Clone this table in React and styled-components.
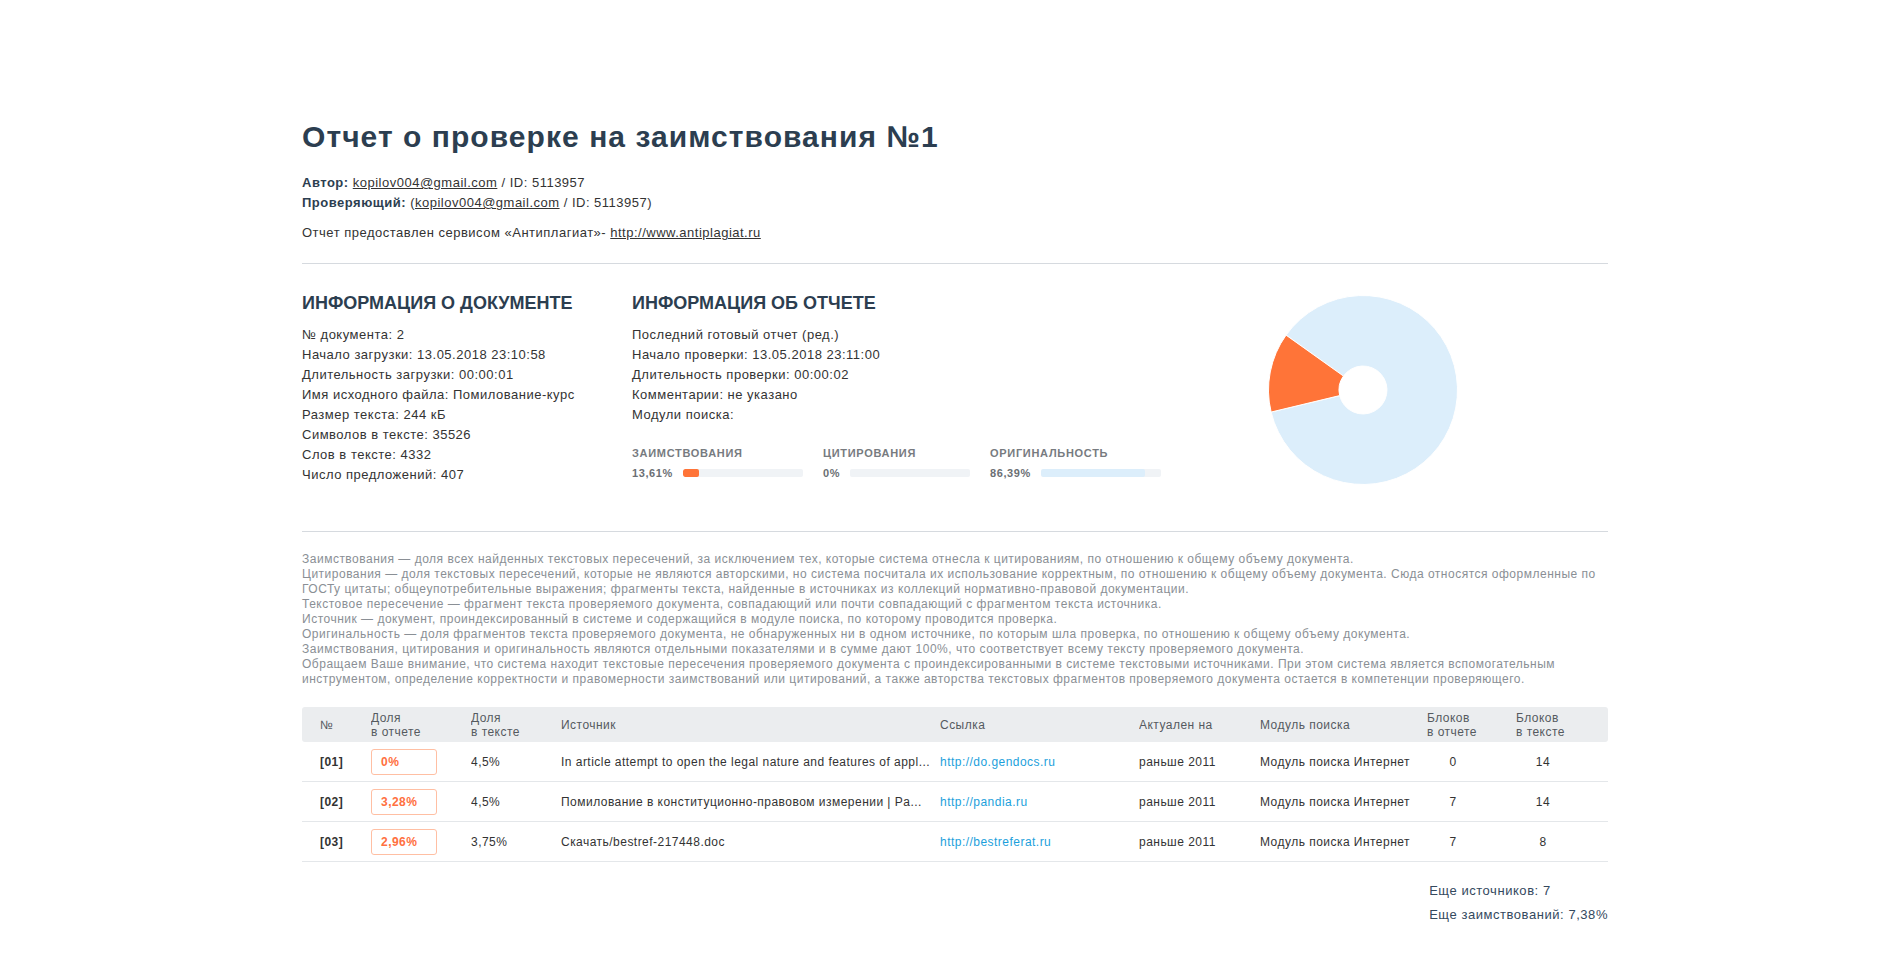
import React from "react";
import styled, { createGlobalStyle } from "styled-components";

const GlobalStyle = createGlobalStyle`
  html, body { margin: 0; padding: 0; background: #ffffff; }
  body {
    font-family: "Liberation Sans", Arial, Helvetica, sans-serif;
    color: #333333;
    -webkit-font-smoothing: antialiased;
  }
  * { box-sizing: border-box; }
`;

const Page = styled.div`
  width: 1306px;
  margin-left: 302px;
  padding-top: 119px;
  padding-bottom: 40px;
`;

const Title = styled.h1`
  margin: 0;
  font-size: 30px;
  line-height: 36px;
  font-weight: 700;
  letter-spacing: 1.05px;
  color: #2c3e50;
`;

const Meta = styled.div`
  margin-top: 18px;
  font-size: 13px;
  line-height: 20px;
  letter-spacing: 0.5px;
  color: #333;
`;

const MetaLine = styled.div`
  margin-top: ${(p) => (p.$gap ? `${p.$gap}px` : "0")};
`;

const Strong = styled.b`
  font-weight: 700;
  color: #2c3e50;
`;

const PlainLink = styled.a`
  color: #333;
  text-decoration: underline;
`;

const Rule = styled.hr`
  margin: ${(p) => p.$top}px 0 0 0;
  border: 0;
  height: 1px;
  background: #d6dadf;
`;

const InfoRow = styled.div`
  display: flex;
  align-items: flex-start;
  padding-top: 29px;
  padding-bottom: 46px;
`;

const Column = styled.div`
  flex: 0 0 ${(p) => p.$w}px;
`;

const Heading = styled.h2`
  margin: 0;
  font-size: 18px;
  line-height: 21.6px;
  font-weight: 700;
  color: #2c3e50;
  text-transform: uppercase;
`;

const List = styled.ul`
  list-style: none;
  margin: 10px 0 0 0;
  padding: 0;
  font-size: 13px;
  line-height: 20px;
  letter-spacing: 0.5px;
  color: #333;
`;

const Bars = styled.div`
  display: flex;
  gap: 20px;
  margin-top: 22px;
`;

const BarItem = styled.div`
  display: flex;
  flex-direction: column;
  gap: 7px;
`;

const BarLabel = styled.div`
  font-size: 11px;
  line-height: 13px;
  font-weight: 700;
  letter-spacing: 0.7px;
  color: #777b80;
  text-transform: uppercase;
`;

const BarRow = styled.div`
  display: flex;
  align-items: center;
  gap: 10px;
`;

const BarValue = styled.span`
  font-size: 11px;
  line-height: 13px;
  font-weight: 700;
  letter-spacing: 0.6px;
  color: #6b6f74;
`;

const Track = styled.div`
  width: 120px;
  height: 8px;
  border-radius: 2px;
  background: #f0f3f6;
  overflow: hidden;
`;

const Fill = styled.div`
  height: 100%;
  border-radius: 2px;
  background: ${(p) => p.$color};
`;

const Chart = styled.div`
  flex: 0 0 190px;
  height: 190px;
  margin-top: 2px;
`;

const Defs = styled.div`
  margin-top: 20px;
  font-size: 12px;
  line-height: 15px;
  letter-spacing: 0.5px;
  color: #8a8f95;
`;

const Table = styled.div`
  margin-top: 20px;
  font-size: 12px;
  letter-spacing: 0.47px;
  color: #333;
`;

const cols = "69px 100px 90px 379px 199px 121px 167px 89px 1fr";

const HeadRow = styled.div`
  display: grid;
  grid-template-columns: ${cols};
  align-items: center;
  height: 35px;
  background: #ebedef;
  border-radius: 3px;
  color: #555a5f;
  line-height: 14px;
`;

const BodyRow = styled.div`
  display: grid;
  grid-template-columns: ${cols};
  align-items: center;
  height: 40px;
  border-bottom: 1px solid #e4e7ea;
  line-height: 14px;
  padding-top: 1px;
`;

const Cell = styled.div`
  padding-left: ${(p) => (p.$first ? "18px" : "0")};
  white-space: nowrap;
  overflow: hidden;
  text-overflow: ellipsis;
  font-weight: ${(p) => (p.$bold ? 700 : 400)};
`;

const Center = styled.div`
  width: ${(p) => p.$w}px;
  text-align: center;
`;

const Badge = styled.div`
  width: 66px;
  height: 26px;
  border: 1px solid #ffbfa3;
  border-radius: 3px;
  padding-left: 9px;
  display: flex;
  align-items: center;
  font-weight: 700;
  color: #ff7040;
`;

const SrcLink = styled.a`
  color: #1c9fdc;
  text-decoration: none;
`;

const Footer = styled.div`
  display: flex;
  justify-content: flex-end;
  margin-top: 17px;
  font-size: 13px;
  line-height: 24px;
  letter-spacing: 0.55px;
  color: #34495e;
`;

const FooterBox = styled.div``;

function polar(cx, cy, r, deg) {
  const a = (deg * Math.PI) / 180;
  return [cx + r * Math.cos(a), cy + r * Math.sin(a)];
}

function slice(cx, cy, R, r, a0, a1) {
  const large = a1 - a0 > 180 ? 1 : 0;
  const [x0, y0] = polar(cx, cy, R, a0);
  const [x1, y1] = polar(cx, cy, R, a1);
  const [x2, y2] = polar(cx, cy, r, a1);
  const [x3, y3] = polar(cx, cy, r, a0);
  return `M${x0} ${y0} A${R} ${R} 0 ${large} 1 ${x1} ${y1} L${x2} ${y2} A${r} ${r} 0 ${large} 0 ${x3} ${y3} Z`;
}

function Donut() {
  const start = 166.5;
  const span = 360 * 0.1361;
  return (
    <svg width="190" height="190" viewBox="0 0 190 190">
      <path
        d={slice(95, 95, 94.5, 24, start + span, start + 360)}
        fill="#dceefb"
        stroke="#ffffff"
        strokeWidth="1"
      />
      <path
        d={slice(95, 95, 94.5, 24, start, start + span)}
        fill="#ff7438"
        stroke="#ffffff"
        strokeWidth="1"
      />
    </svg>
  );
}

const docInfo = [
  "№ документа: 2",
  "Начало загрузки: 13.05.2018 23:10:58",
  "Длительность загрузки: 00:00:01",
  "Имя исходного файла: Помилование-курс",
  "Размер текста: 244 кБ",
  "Символов в тексте: 35526",
  "Слов в тексте: 4332",
  "Число предложений: 407",
];

const reportInfo = [
  "Последний готовый отчет (ред.)",
  "Начало проверки: 13.05.2018 23:11:00",
  "Длительность проверки: 00:00:02",
  "Комментарии: не указано",
  "Модули поиска:",
];

const bars = [
  { label: "Заимствования", value: "13,61%", pct: 13.61, color: "#ff7438" },
  { label: "Цитирования", value: "0%", pct: 0, color: "#ff7438" },
  { label: "Оригинальность", value: "86,39%", pct: 86.39, color: "#dceefb" },
];

const definitions = [
  "Заимствования — доля всех найденных текстовых пересечений, за исключением тех, которые система отнесла к цитированиям, по отношению к общему объему документа.",
  "Цитирования — доля текстовых пересечений, которые не являются авторскими, но система посчитала их использование корректным, по отношению к общему объему документа. Сюда относятся оформленные по ГОСТу цитаты; общеупотребительные выражения; фрагменты текста, найденные в источниках из коллекций нормативно-правовой документации.",
  "Текстовое пересечение — фрагмент текста проверяемого документа, совпадающий или почти совпадающий с фрагментом текста источника.",
  "Источник — документ, проиндексированный в системе и содержащийся в модуле поиска, по которому проводится проверка.",
  "Оригинальность — доля фрагментов текста проверяемого документа, не обнаруженных ни в одном источнике, по которым шла проверка, по отношению к общему объему документа.",
  "Заимствования, цитирования и оригинальность являются отдельными показателями и в сумме дают 100%, что соответствует всему тексту проверяемого документа.",
  "Обращаем Ваше внимание, что система находит текстовые пересечения проверяемого документа с проиндексированными в системе текстовыми источниками. При этом система является вспомогательным инструментом, определение корректности и правомерности заимствований или цитирований, а также авторства текстовых фрагментов проверяемого документа остается в компетенции проверяющего.",
];

const rows = [
  {
    n: "[01]",
    share: "0%",
    text: "4,5%",
    source: "In article attempt to open the legal nature and features of appl...",
    link: "http://do.gendocs.ru",
    date: "раньше 2011",
    module: "Модуль поиска Интернет",
    b1: "0",
    b2: "14",
  },
  {
    n: "[02]",
    share: "3,28%",
    text: "4,5%",
    source: "Помилование в конституционно-правовом измерении | Pa...",
    link: "http://pandia.ru",
    date: "раньше 2011",
    module: "Модуль поиска Интернет",
    b1: "7",
    b2: "14",
  },
  {
    n: "[03]",
    share: "2,96%",
    text: "3,75%",
    source: "Скачать/bestref-217448.doc",
    link: "http://bestreferat.ru",
    date: "раньше 2011",
    module: "Модуль поиска Интернет",
    b1: "7",
    b2: "8",
  },
];

export default function App() {
  return (
    <>
      <GlobalStyle />
      <Page>
        <Title>Отчет о проверке на заимствования №1</Title>
        <Meta>
          <MetaLine>
            <Strong>Автор:</Strong> <PlainLink href="#">kopilov004@gmail.com</PlainLink> / ID: 5113957
          </MetaLine>
          <MetaLine>
            <Strong>Проверяющий:</Strong> (<PlainLink href="#">kopilov004@gmail.com</PlainLink> / ID: 5113957)
          </MetaLine>
          <MetaLine $gap={10}>
            Отчет предоставлен сервисом «Антиплагиат»- <PlainLink href="#">http://www.antiplagiat.ru</PlainLink>
          </MetaLine>
        </Meta>
        <Rule $top={20} />

        <InfoRow>
          <Column $w={330}>
            <Heading>Информация о документе</Heading>
            <List>
              {docInfo.map((t) => (
                <li key={t}>{t}</li>
              ))}
            </List>
          </Column>
          <Column $w={636}>
            <Heading>Информация об отчете</Heading>
            <List>
              {reportInfo.map((t) => (
                <li key={t}>{t}</li>
              ))}
            </List>
            <Bars>
              {bars.map((b) => (
                <BarItem key={b.label}>
                  <BarLabel>{b.label}</BarLabel>
                  <BarRow>
                    <BarValue>{b.value}</BarValue>
                    <Track>
                      <Fill $color={b.color} style={{ width: `${b.pct}%` }} />
                    </Track>
                  </BarRow>
                </BarItem>
              ))}
            </Bars>
          </Column>
          <Chart>
            <Donut />
          </Chart>
        </InfoRow>

        <Rule $top={0} />

        <Defs>
          {definitions.map((d) => (
            <div key={d.slice(0, 30)}>{d}</div>
          ))}
        </Defs>

        <Table>
          <HeadRow>
            <Cell $first>№</Cell>
            <Cell>
              Доля
              <br />в отчете
            </Cell>
            <Cell>
              Доля
              <br />в тексте
            </Cell>
            <Cell>Источник</Cell>
            <Cell>Ссылка</Cell>
            <Cell>Актуален на</Cell>
            <Cell>Модуль поиска</Cell>
            <Cell>
              Блоков
              <br />в отчете
            </Cell>
            <Cell>
              Блоков
              <br />в тексте
            </Cell>
          </HeadRow>
          {rows.map((r) => (
            <BodyRow key={r.n}>
              <Cell $first $bold>
                {r.n}
              </Cell>
              <Cell>
                <Badge>{r.share}</Badge>
              </Cell>
              <Cell>{r.text}</Cell>
              <Cell>{r.source}</Cell>
              <Cell>
                <SrcLink href="#">{r.link}</SrcLink>
              </Cell>
              <Cell>{r.date}</Cell>
              <Cell>{r.module}</Cell>
              <Cell>
                <Center $w={52}>{r.b1}</Center>
              </Cell>
              <Cell>
                <Center $w={54}>{r.b2}</Center>
              </Cell>
            </BodyRow>
          ))}
        </Table>

        <Footer>
          <FooterBox>
            <div>Еще источников: 7</div>
            <div>Еще заимствований: 7,38%</div>
          </FooterBox>
        </Footer>
      </Page>
    </>
  );
}
